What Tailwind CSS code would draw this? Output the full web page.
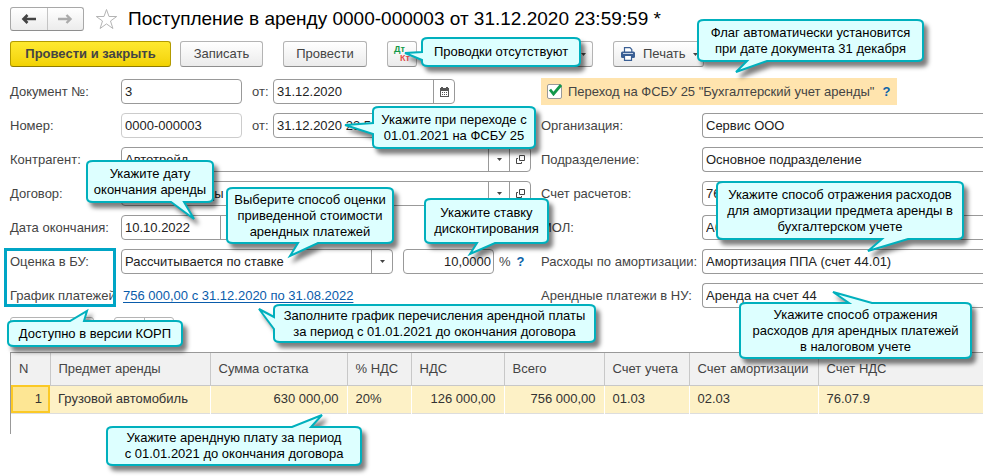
<!DOCTYPE html>
<html lang="ru">
<head>
  <meta charset="UTF-8" />
  <meta name="viewport" content="width=device-width, initial-scale=1.0" />
  <title>Поступление в аренду</title>
  <script src="https://cdn.jsdelivr.net/npm/@tailwindcss/browser@4"></script>
</head>
<body class="relative min-h-screen overflow-x-hidden bg-white font-['Liberation_Sans',Arial,sans-serif] text-[13px] leading-4 text-[#444]">

  <main class="pl-[10px] pt-[7px]">
    <!-- Title bar -->
    <header class="flex items-center h-6">
      <div class="flex h-6 w-[74px] rounded-[3px] border border-[#a8a8a8] border-b-[#8e8e8e] bg-linear-to-b from-white to-[#ececec]">
        <button type="button" aria-label="Назад" class="flex flex-1 items-center justify-center border-r border-[#c4c4c4]">
          <svg class="w-4 h-3" viewBox="0 0 16 12"><path d="M6.500 2L2.500 6l4 4M2.500 6H15" fill="none" stroke="#444" stroke-width="2.600" /></svg>
        </button>
        <button type="button" aria-label="Вперед" class="flex flex-1 items-center justify-center">
          <svg class="w-4 h-3" viewBox="0 0 16 12"><path d="M9.500 2L13.500 6l-4 4M13.500 6H1" fill="none" stroke="#ababab" stroke-width="2.400" /></svg>
        </button>
      </div>
      <button type="button" aria-label="В избранное" class="ml-[11px]">
        <svg class="w-[23px] h-[22px]" viewBox="0 0 23 22"><path d="M11.500 1.500L14 8.500h7.700l-6.200 4.500 2.400 7.500-6.400-4.600-6.400 4.600 2.400-7.500-6.200-4.500H9z" fill="#fff" stroke="#b4b4b4" /></svg>
      </button>
      <h1 class="ml-[10px] text-[19px] leading-6 text-black whitespace-nowrap">Поступление в аренду 0000-000003 от 31.12.2020 23:59:59 *</h1>
    </header>

    <!-- Commands -->
    <div class="mt-[10px] flex h-[26px]">
      <button type="button" class="w-[161px] rounded-[3px] border border-[#b39b00] border-b-[#8f7c00] bg-linear-to-b from-[#ffe92e] to-[#f2d200] font-bold">Провести и закрыть</button>
      <button type="button" class="ml-[9px] w-[83px] rounded-[3px] border border-[#b4b4b4] border-b-[#8e8e8e] bg-linear-to-b from-white to-[#ebebeb]">Записать</button>
      <button type="button" class="ml-5 w-[84px] rounded-[3px] border border-[#b4b4b4] border-b-[#8e8e8e] bg-linear-to-b from-white to-[#ebebeb]">Провести</button>
      <button type="button" class="ml-5 flex w-[30px] flex-col rounded-[3px] border border-[#b4b4b4] border-b-[#8e8e8e] bg-linear-to-b from-white to-[#ebebeb] px-[6px] pt-[3px] text-[9px] font-bold leading-[9px]">
        <span class="self-start text-[#139a48]">Дт</span>
        <span class="self-end text-[#e2504c]">Кт</span>
      </button>
      <button type="button" aria-label="Создать на основании" class="ml-5 flex w-[156px] items-center justify-end rounded-[3px] border border-[#b4b4b4] border-b-[#8e8e8e] bg-linear-to-b from-white to-[#ebebeb] pr-[6px]">
        <svg class="w-[5px] h-[3px]" viewBox="0 0 5 3"><path d="M0 0h5L2.500 3z" fill="#444" /></svg>
      </button>
      <button type="button" class="ml-5 flex w-[91px] items-center rounded-[3px] border border-[#b4b4b4] border-b-[#8e8e8e] bg-linear-to-b from-white to-[#ebebeb] pl-[7px]">
        <svg class="w-[14px] h-[14px]" viewBox="0 0 14 14">
          <path d="M3.500 5V.7h5.500l1.800 1.800V5" fill="#fff" stroke="#3a5f94" stroke-width="1.200" />
          <rect x="0" y="4.500" width="14" height="6.500" rx="1.500" fill="#3a5f94" />
          <path d="M2 6.500h10" stroke="#c5d3e6" />
          <path d="M3.500 8.500h7v4.800h-7z" fill="#fff" stroke="#3a5f94" stroke-width="1.200" />
        </svg>
        <span class="ml-2">Печать</span>
        <svg class="ml-[7px] w-[5px] h-[3px]" viewBox="0 0 5 3"><path d="M0 0h5L2.500 3z" fill="#444" /></svg>
      </button>
    </div>

    <!-- Document fields -->
    <form class="mt-3 flex gap-[10px]">
      <div class="flex w-[521px] shrink-0 flex-col gap-[9px]">
        <div class="flex h-[25px] items-center">
          <label for="docNo" class="w-[111px]">Документ №:</label>
          <input id="docNo" value="3" class="h-full w-[121px] rounded-[4px] border border-[#999] px-[3px] text-[#222]" />
          <label for="docDate" class="ml-[10px] w-[21px]">от:</label>
          <div class="flex h-full w-[182px] rounded-[4px] border border-[#999]">
            <input id="docDate" value="31.12.2020" class="min-w-0 flex-1 px-[3px] text-[#222]" />
            <button type="button" aria-label="Календарь" class="flex w-[21px] items-center justify-center border-l border-[#999]">
              <svg class="w-[9px] h-[10px]" viewBox="0 0 9 10"><path d="M0 1h1V0h2v1h3V0h2v1h1v9H0z" fill="#555" /><path d="M1 4h7v5H1z" fill="#fff" /><path d="M2 5.500h5M2 7.500h5" stroke="#555" stroke-dasharray="1 1" /></svg>
            </button>
          </div>
        </div>
        <div class="flex h-[25px] items-center">
          <label for="num" class="w-[111px]">Номер:</label>
          <input id="num" value="0000-000003" class="h-full w-[121px] rounded-[4px] border border-[#ccc] px-[3px] text-[#222]" />
          <label for="numDate" class="ml-[10px] w-[21px]">от:</label>
          <input id="numDate" value="31.12.2020 23:59:59" class="h-full w-[182px] rounded-[4px] border border-[#999] px-[3px] text-[#222]" />
        </div>
        <div class="flex h-[25px] items-center">
          <label for="partner" class="w-[111px]">Контрагент:</label>
          <div class="flex h-full flex-1 rounded-[4px] border border-[#999]">
            <select id="partner" class="min-w-0 flex-1 appearance-none px-[3px] text-[#222]"><option>Автотрейд</option></select>
            <span class="flex w-[21px] items-center justify-center border-l border-[#999]"><svg class="w-[5px] h-[3px]" viewBox="0 0 5 3"><path d="M0 0h5L2.500 3z" fill="#444" /></svg></span>
            <button type="button" aria-label="Открыть контрагента" class="flex w-[21px] items-center justify-center border-l border-[#999]"><svg class="w-[9px] h-[9px]" viewBox="0 0 9 9"><path d="M3.500.5h5v5h-5zM2 3.500H.5v5h5V7" fill="none" stroke="#444" /></svg></button>
          </div>
        </div>
        <div class="flex h-[25px] items-center">
          <label for="contract" class="w-[111px]">Договор:</label>
          <div class="flex h-full flex-1 rounded-[4px] border border-[#999]">
            <select id="contract" class="min-w-0 flex-1 appearance-none px-[3px] text-[#222]"><option>Договор аренды</option></select>
            <span class="flex w-[21px] items-center justify-center border-l border-[#999]"><svg class="w-[5px] h-[3px]" viewBox="0 0 5 3"><path d="M0 0h5L2.500 3z" fill="#444" /></svg></span>
            <button type="button" aria-label="Открыть договор" class="flex w-[21px] items-center justify-center border-l border-[#999]"><svg class="w-[9px] h-[9px]" viewBox="0 0 9 9"><path d="M3.500.5h5v5h-5zM2 3.500H.5v5h5V7" fill="none" stroke="#444" /></svg></button>
          </div>
        </div>
        <div class="flex h-[25px] items-center">
          <label for="endDate" class="w-[111px]">Дата окончания:</label>
          <div class="flex h-full w-[121px] rounded-[4px] border border-[#999]">
            <input id="endDate" value="10.10.2022" class="min-w-0 flex-1 px-[3px] text-[#222]" />
            <button type="button" aria-label="Календарь" class="w-[21px] border-l border-[#999]"></button>
          </div>
        </div>
        <div class="flex h-[25px] items-center">
          <label for="method" class="w-[111px]">Оценка в БУ:</label>
          <div class="flex h-full w-[272px] rounded-[4px] border border-[#999]">
            <select id="method" class="min-w-0 flex-1 appearance-none px-[3px] text-[#222]"><option>Рассчитывается по ставке</option></select>
            <span class="flex w-[21px] items-center justify-center border-l border-[#999]"><svg class="w-[5px] h-[3px]" viewBox="0 0 5 3"><path d="M0 0h5L2.500 3z" fill="#444" /></svg></span>
          </div>
          <input aria-label="Ставка" value="10,0000" class="ml-[10px] h-full w-[91px] rounded-[4px] border border-[#999] px-[2px] text-right text-[#222]" />
          <span class="ml-[5px]">%</span>
          <a href="#" class="ml-[6px] font-bold text-[#0b62a8]">?</a>
        </div>
        <div class="flex h-[25px] items-center">
          <span class="w-[113px]">График платежей</span>
          <a href="#" class="text-[#0a5cab] underline underline-offset-2 whitespace-nowrap">756 000,00 с 31.12.2020 по 31.08.2022</a>
        </div>
      </div>

      <div class="flex min-w-0 flex-1 flex-col gap-[9px]">
        <div class="flex h-[25px] items-center">
          <div class="flex h-[27px] w-[356px] items-center bg-[#ffe4ae] pl-[6px] whitespace-nowrap">
            <span class="relative flex">
              <input id="fsbu" type="checkbox" checked class="size-[15px] appearance-none rounded-[2px] border border-[#999] bg-white" />
              <svg class="pointer-events-none absolute left-[2px] top-0 w-[14px] h-[12px]" viewBox="0 0 14 12"><path d="M1 5.500l3.500 4.500L12 1" fill="none" stroke="#12984a" stroke-width="2.800" /></svg>
            </span>
            <label for="fsbu" class="ml-[6px]">Переход на ФСБУ 25 "Бухгалтерский учет аренды"</label>
            <a href="#" class="ml-[8px] font-bold text-[#0b62a8]">?</a>
          </div>
        </div>
        <div class="flex h-[25px] items-center">
          <label for="org" class="w-[161px] shrink-0">Организация:</label>
          <input id="org" value="Сервис ООО" class="h-full min-w-0 flex-1 rounded-l-[4px] border border-r-0 border-[#999] px-[3px] text-[#222]" />
        </div>
        <div class="flex h-[25px] items-center">
          <label for="dept" class="w-[161px] shrink-0">Подразделение:</label>
          <input id="dept" value="Основное подразделение" class="h-full min-w-0 flex-1 rounded-l-[4px] border border-r-0 border-[#999] px-[3px] text-[#222]" />
        </div>
        <div class="flex h-[25px] items-center">
          <label for="acc" class="w-[161px] shrink-0">Счет расчетов:</label>
          <input id="acc" value="76.07.1" class="h-full w-[111px] rounded-[4px] border border-[#999] px-[3px] text-[#222]" />
        </div>
        <div class="flex h-[25px] items-center">
          <label for="mol" class="w-[161px] shrink-0">МОЛ:</label>
          <input id="mol" value="Абрамов" class="h-full min-w-0 flex-1 rounded-l-[4px] border border-r-0 border-[#999] px-[3px] text-[#222]" />
        </div>
        <div class="flex h-[25px] items-center">
          <label for="amort" class="w-[161px] shrink-0 whitespace-nowrap">Расходы по амортизации:</label>
          <input id="amort" value="Амортизация ППА (счет 44.01)" class="h-full min-w-0 flex-1 rounded-l-[4px] border border-r-0 border-[#999] px-[3px] text-[#222]" />
        </div>
        <div class="flex h-[25px] items-center">
          <label for="rent" class="w-[161px] shrink-0 whitespace-nowrap">Арендные платежи в НУ:</label>
          <input id="rent" value="Аренда на счет 44" class="h-full min-w-0 flex-1 rounded-l-[4px] border border-r-0 border-[#999] px-[3px] text-[#222]" />
        </div>
      </div>
    </form>

    <!-- Table commands -->
    <div class="mt-[9px] flex h-[26px] gap-5">
      <button type="button" aria-label="Добавить" class="w-[84px] rounded-[3px] border border-[#b4b4b4]"></button>
      <div class="flex w-[60px] rounded-[3px] border border-[#b4b4b4]">
        <button type="button" aria-label="Вверх" class="flex-1 border-r border-[#b4b4b4]"></button>
        <button type="button" aria-label="Вниз" class="flex-1"></button>
      </div>
    </div>

    <!-- Leased items -->
    <div class="mt-[9px] h-[82px] border-l border-t border-[#999]">
      <table class="w-full table-fixed border-collapse text-left">
        <thead>
          <tr class="h-8 border-b border-[#c8c8c8] bg-[#f1f1f1]">
            <th class="w-[39px] border-r border-[#c8c8c8] pl-2 font-normal">N</th>
            <th class="w-[160px] border-r border-[#c8c8c8] pl-2 font-normal">Предмет аренды</th>
            <th class="w-[137px] border-r border-[#c8c8c8] pl-2 font-normal">Сумма остатка</th>
            <th class="w-16 border-r border-[#c8c8c8] pl-2 font-normal">% НДС</th>
            <th class="w-[93px] border-r border-[#c8c8c8] pl-2 font-normal">НДС</th>
            <th class="w-[100px] border-r border-[#c8c8c8] pl-2 font-normal">Всего</th>
            <th class="w-[85px] border-r border-[#c8c8c8] pl-2 font-normal">Счет учета</th>
            <th class="w-[129px] border-r border-[#c8c8c8] pl-2 font-normal">Счет амортизации</th>
            <th class="pl-2 font-normal">Счет НДС</th>
          </tr>
        </thead>
        <tbody>
          <tr class="h-7 border-b border-[#ddd] bg-[#fdf1c6] text-[#333]">
            <td class="bg-[#fde694] pr-2 text-right outline-2 -outline-offset-2 outline-[#fbc926]">1</td>
            <td class="border-r border-white pl-2">Грузовой автомобиль</td>
            <td class="border-r border-white pr-2 text-right">630 000,00</td>
            <td class="border-r border-white pl-2">20%</td>
            <td class="border-r border-white pr-2 text-right">126 000,00</td>
            <td class="border-r border-white pr-2 text-right">756 000,00</td>
            <td class="border-r border-white pl-2">01.03</td>
            <td class="border-r border-white pl-2">02.03</td>
            <td class="pl-2">76.07.9</td>
          </tr>
        </tbody>
      </table>
    </div>
  </main>

  <!-- Frame around the fields of the KORP version -->
  <div class="pointer-events-none absolute left-1 top-[248px] h-[59px] w-28 border-3 border-[#00a5c5]"></div>

  <!-- Callouts -->
  <aside class="text-center leading-4 text-black whitespace-nowrap">
    <div class="absolute left-[422px] top-[38px] flex h-7 w-[158px] items-center justify-center">
      <svg class="absolute inset-0 size-full overflow-visible drop-shadow-[4px_5px_2px_#00000080]"><path d="M6 0H152Q158 0 158 4V24Q158 28 152 28H6Q0 28 0 24V22L-17 15L0 14V4Q0 0 6 0Z" fill="#dff" stroke="#00b0bd" stroke-width="2" /></svg>
      <p class="relative">Проводки отсутствуют</p>
    </div>
    <div class="absolute left-[698px] top-5 flex h-[41px] w-[225px] items-center justify-center">
      <svg class="absolute inset-0 size-full overflow-visible drop-shadow-[4px_5px_2px_#00000080]"><path d="M6 0H219Q225 0 225 4V37Q225 41 219 41H69L38 52L49 41H6Q0 41 0 37V4Q0 0 6 0Z" fill="#dff" stroke="#00b0bd" stroke-width="2" /></svg>
      <p class="relative">Флаг автоматически установится<br />при дате документа 31 декабря</p>
    </div>
    <div class="absolute left-[373px] top-[107px] flex h-[41px] w-[162px] items-center justify-center">
      <svg class="absolute inset-0 size-full overflow-visible drop-shadow-[4px_5px_2px_#00000080]"><path d="M6 0H156Q162 0 162 4V37Q162 41 156 41H6Q0 41 0 37V27L-28 18L0 16V4Q0 0 6 0Z" fill="#dff" stroke="#00b0bd" stroke-width="2" /></svg>
      <p class="relative">Укажите при переходе с<br />01.01.2021 на ФСБУ 25</p>
    </div>
    <div class="absolute left-[87px] top-[161px] flex h-[41px] w-[126px] items-center justify-center">
      <svg class="absolute inset-0 size-full overflow-visible drop-shadow-[4px_5px_2px_#00000080]"><path d="M6 0H120Q126 0 126 4V37Q126 41 120 41H97L107 58L84 41H6Q0 41 0 37V4Q0 0 6 0Z" fill="#dff" stroke="#00b0bd" stroke-width="2" /></svg>
      <p class="relative">Укажите дату<br />окончания аренды</p>
    </div>
    <div class="absolute left-[227px] top-[188px] flex h-[55px] w-[166px] items-center justify-center">
      <svg class="absolute inset-0 size-full overflow-visible drop-shadow-[4px_5px_2px_#00000080]"><path d="M6 0H160Q166 0 166 4V51Q166 55 160 55H91L63 68L71 55H6Q0 55 0 51V4Q0 0 6 0Z" fill="#dff" stroke="#00b0bd" stroke-width="2" /></svg>
      <p class="relative">Выберите способ оценки<br />приведенной стоимости<br />арендных платежей</p>
    </div>
    <div class="absolute left-[425px] top-[199px] flex h-11 w-[123px] items-center justify-center">
      <svg class="absolute inset-0 size-full overflow-visible drop-shadow-[4px_5px_2px_#00000080]"><path d="M6 0H117Q123 0 123 4V40Q123 44 117 44H70L45 55L52 44H6Q0 44 0 40V4Q0 0 6 0Z" fill="#dff" stroke="#00b0bd" stroke-width="2" /></svg>
      <p class="relative">Укажите ставку<br />дисконтирования</p>
    </div>
    <div class="absolute left-[717px] top-[182px] flex h-[57px] w-[246px] items-center justify-center">
      <svg class="absolute inset-0 size-full overflow-visible drop-shadow-[4px_5px_2px_#00000080]"><path d="M6 0H240Q246 0 246 4V53Q246 57 240 57H191L151 69L165 57H6Q0 57 0 53V4Q0 0 6 0Z" fill="#dff" stroke="#00b0bd" stroke-width="2" /></svg>
      <p class="relative">Укажите способ отражения расходов<br />для амортизации предмета аренды в<br />бухгалтерском учете</p>
    </div>
    <div class="absolute left-2 top-[321px] flex h-[25px] w-[174px] items-center justify-center">
      <svg class="absolute inset-0 size-full overflow-visible drop-shadow-[4px_5px_2px_#00000080]"><path d="M6 0H62L79 -10L76 0H168Q174 0 174 4V21Q174 25 168 25H6Q0 25 0 21V4Q0 0 6 0Z" fill="#dff" stroke="#00b0bd" stroke-width="2" /></svg>
      <p class="relative">Доступно в версии КОРП</p>
    </div>
    <div class="absolute left-[274px] top-[305px] flex h-[37px] w-[321px] items-center justify-center">
      <svg class="absolute inset-0 size-full overflow-visible drop-shadow-[4px_5px_2px_#00000080]"><path d="M6 0H315Q321 0 321 4V33Q321 37 315 37H6Q0 37 0 33V24L-15 4L0 12V4Q0 0 6 0Z" fill="#dff" stroke="#00b0bd" stroke-width="2" /></svg>
      <p class="relative">Заполните график перечисления арендной платы<br />за период с 01.01.2021 до окончания договора</p>
    </div>
    <div class="absolute left-[107px] top-[427px] flex h-[38px] w-[254px] items-center justify-center">
      <svg class="absolute inset-0 size-full overflow-visible drop-shadow-[4px_5px_2px_#00000080]"><path d="M6 0H185L215 -12L204 0H248Q254 0 254 4V34Q254 38 248 38H6Q0 38 0 34V4Q0 0 6 0Z" fill="#dff" stroke="#00b0bd" stroke-width="2" /></svg>
      <p class="relative">Укажите арендную плату за период<br />с 01.01.2021 до окончания договора</p>
    </div>
    <div class="absolute left-[740px] top-[303px] flex h-[55px] w-[231px] items-center justify-center">
      <svg class="absolute inset-0 size-full overflow-visible drop-shadow-[4px_5px_2px_#00000080]"><path d="M6 0H109L93 -11L132 0H225Q231 0 231 4V51Q231 55 225 55H6Q0 55 0 51V4Q0 0 6 0Z" fill="#dff" stroke="#00b0bd" stroke-width="2" /></svg>
      <p class="relative">Укажите способ отражения<br />расходов для арендных платежей<br />в налоговом учете</p>
    </div>
  </aside>
</body>
</html>
